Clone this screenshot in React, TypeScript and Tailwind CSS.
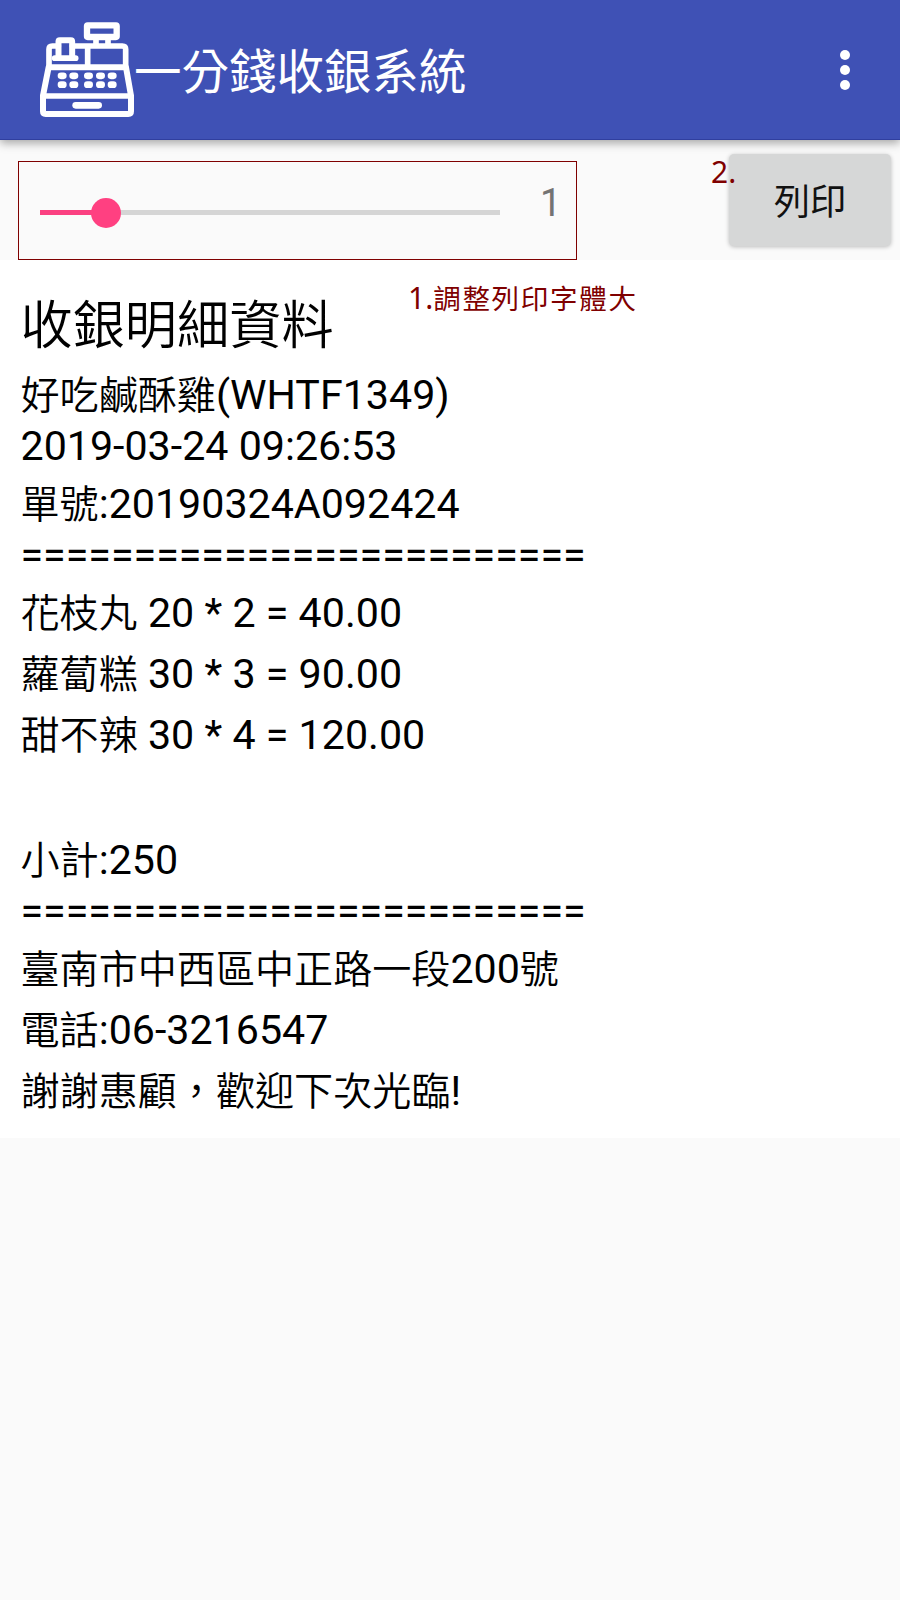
import React from 'react'

interface ReceiptLine {
  text: string
  className: string
}

const RULE = '========================='

const lines: ReceiptLine[] = [
  { text: '好吃鹹酥雞(WHTF1349)', className: 'h-[57px] leading-[61px]' },
  { text: '2019-03-24 09:26:53', className: 'h-[52px] leading-[48px]' },
  { text: '單號:20190324A092424', className: 'h-[61px] leading-[61px]' },
  { text: RULE, className: 'h-[48px] leading-[40px]' },
  { text: '花枝丸 20 * 2 = 40.00', className: 'h-[61px] leading-[61px]' },
  { text: '蘿蔔糕 30 * 3 = 90.00', className: 'h-[61px] leading-[61px]' },
  { text: '甜不辣 30 * 4 = 120.00', className: 'h-[61px] leading-[61px]' },
  { text: '', className: 'h-16' },
  { text: '小計:250', className: 'h-[61px] leading-[61px]' },
  { text: RULE, className: 'h-[48px] leading-[40px]' },
  { text: '臺南市中西區中正路一段200號', className: 'h-[61px] leading-[61px]' },
  { text: '電話:06-3216547', className: 'h-[61px] leading-[61px]' },
  { text: '謝謝惠顧，歡迎下次光臨!', className: 'h-[61px] leading-[61px]' }
]

// Chinese runs are set a little smaller than the latin text around them
const MixedText: React.FC<{ text: string }> = ({ text }) => (
  <>
    {text.split(/([\u3000-\u9fff\uff00-\uffef]+)/).filter(Boolean).map((part, index) =>
      /[\u3000-\u9fff\uff00-\uffef]/.test(part) ? (
        <span key={index} className="font-['Noto_Sans_CJK_TC',sans-serif] text-[39.1px] font-[350] leading-none">{part}</span>
      ) : (
        <span key={index}>{part}</span>
      )
    )}
  </>
)

const RegisterIcon: React.FC = () => (
  <svg className="w-[130px] h-[120px] shrink-0" viewBox="0 0 390 360" fill="none" stroke="#fff" strokeLinejoin="round" strokeLinecap="round">
    <rect x="201" y="46" width="89" height="35" rx="2" strokeWidth="19" />
    <path d="M228 88v16M264 88v16" strokeWidth="17" strokeLinecap="butt" />
    <path d="M87 170V118q0-10 10-10h18M157 108H307q10 0 10 10V170M203 108v62" strokeWidth="17" />
    <path d="M115.500 140V95q0-4 4-4h33q4 0 4 4v45" strokeWidth="18" />
    <path d="M104 144.500H167" strokeWidth="17" />
    <path d="M86 171.500H318L333 257V304q0 8-8 8H77q-8 0-8-8V257Z" strokeWidth="18" />
    <path d="M70 258H332" strokeWidth="17" />
    <path d="M167 286H236" strokeWidth="20" />
    <path
      d="M123 197.500h7M158 197.500h7M202 197.500h7M238 197.500h7M273 197.500h7M123 224h7M158 224h7M202 224h7M238 224h7M273 224h7"
      strokeWidth="20"
    />
  </svg>
)

const AppBar: React.FC = () => (
  <header className="relative z-10 flex h-[140px] items-start border-b border-[#303f9f] bg-[#3f51b5] pl-5 pt-2.5 text-white shadow-[0_3px_9px_rgba(0,0,0,0.35)]">
    <RegisterIcon />
    <h1 className="-ml-4 mt-[27px] font-['Noto_Sans_CJK_TC',sans-serif] text-[47.5px] leading-[64px]">一分錢收銀系統</h1>
    <button className="ml-auto mr-[50px] mt-10 flex flex-col gap-[5px]" aria-label="menu">
      <span className="size-2.5 rounded-full bg-white" />
      <span className="size-2.5 rounded-full bg-white" />
      <span className="size-2.5 rounded-full bg-white" />
    </button>
  </header>
)

const Toolbar: React.FC = () => (
  <div className="flex h-[120px] items-start pl-[18px] pr-[9px]">
    <div className="mt-[21px] flex h-[99px] w-[559px] items-start border border-[#7f0000] pl-[21px]">
      <div className="relative mt-[48px] h-[5px] w-[460px] bg-[#d5d5d5]">
        <div className="h-full w-[66px] bg-[#fb4081]" />
        <span className="absolute -top-[12.5px] left-[51px] size-[30px] rounded-full bg-[#ff4081]" />
      </div>
      <span className="ml-10 mt-[18px] font-[Roboto,sans-serif] text-[38px] leading-[46px] text-[#737373]">1</span>
    </div>
    <div className="relative ml-auto mt-[14px]">
      <button className="block h-[92px] w-[162px] rounded-[5px] bg-[#d6d7d7] pb-0.5 font-['Noto_Sans_CJK_TC',sans-serif] text-[36px] leading-none text-[#111] shadow-[0_1px_4px_rgba(0,0,0,0.25)]">
        列印
      </button>
      <span className="absolute -left-[18px] -top-[3px] font-['Noto_Sans',sans-serif] text-[30px] leading-[42px] text-[#7f0000]">2.</span>
    </div>
  </div>
)

const Receipt: React.FC = () => (
  <main className="relative h-[878px] bg-white pl-[20.5px] text-black">
    <h2 className="h-[105px] pt-[23px] font-['Noto_Sans_CJK_TC',sans-serif] text-[52.2px] font-[350] leading-[76px]">收銀明細資料</h2>
    <p className="absolute left-[408px] top-[17px] whitespace-nowrap font-['Noto_Sans',sans-serif] text-[30px] leading-[42px] text-[#7f0000]">
      1.<span className="font-['Noto_Sans_CJK_TC',sans-serif] text-[27.5px] leading-none tracking-[1.7px]">調整列印字體大</span>
    </p>
    <div className="font-[Roboto,sans-serif] text-[41.2px]">
      {lines.map((line, index) => (
        <div key={index} className={`whitespace-pre ${line.className}`}>
          <MixedText text={line.text} />
        </div>
      ))}
    </div>
  </main>
)

export default function App() {
  return (
    <div className="h-[1600px] w-[900px] overflow-hidden bg-[#fafafa]">
      <AppBar />
      <Toolbar />
      <Receipt />
    </div>
  )
}
